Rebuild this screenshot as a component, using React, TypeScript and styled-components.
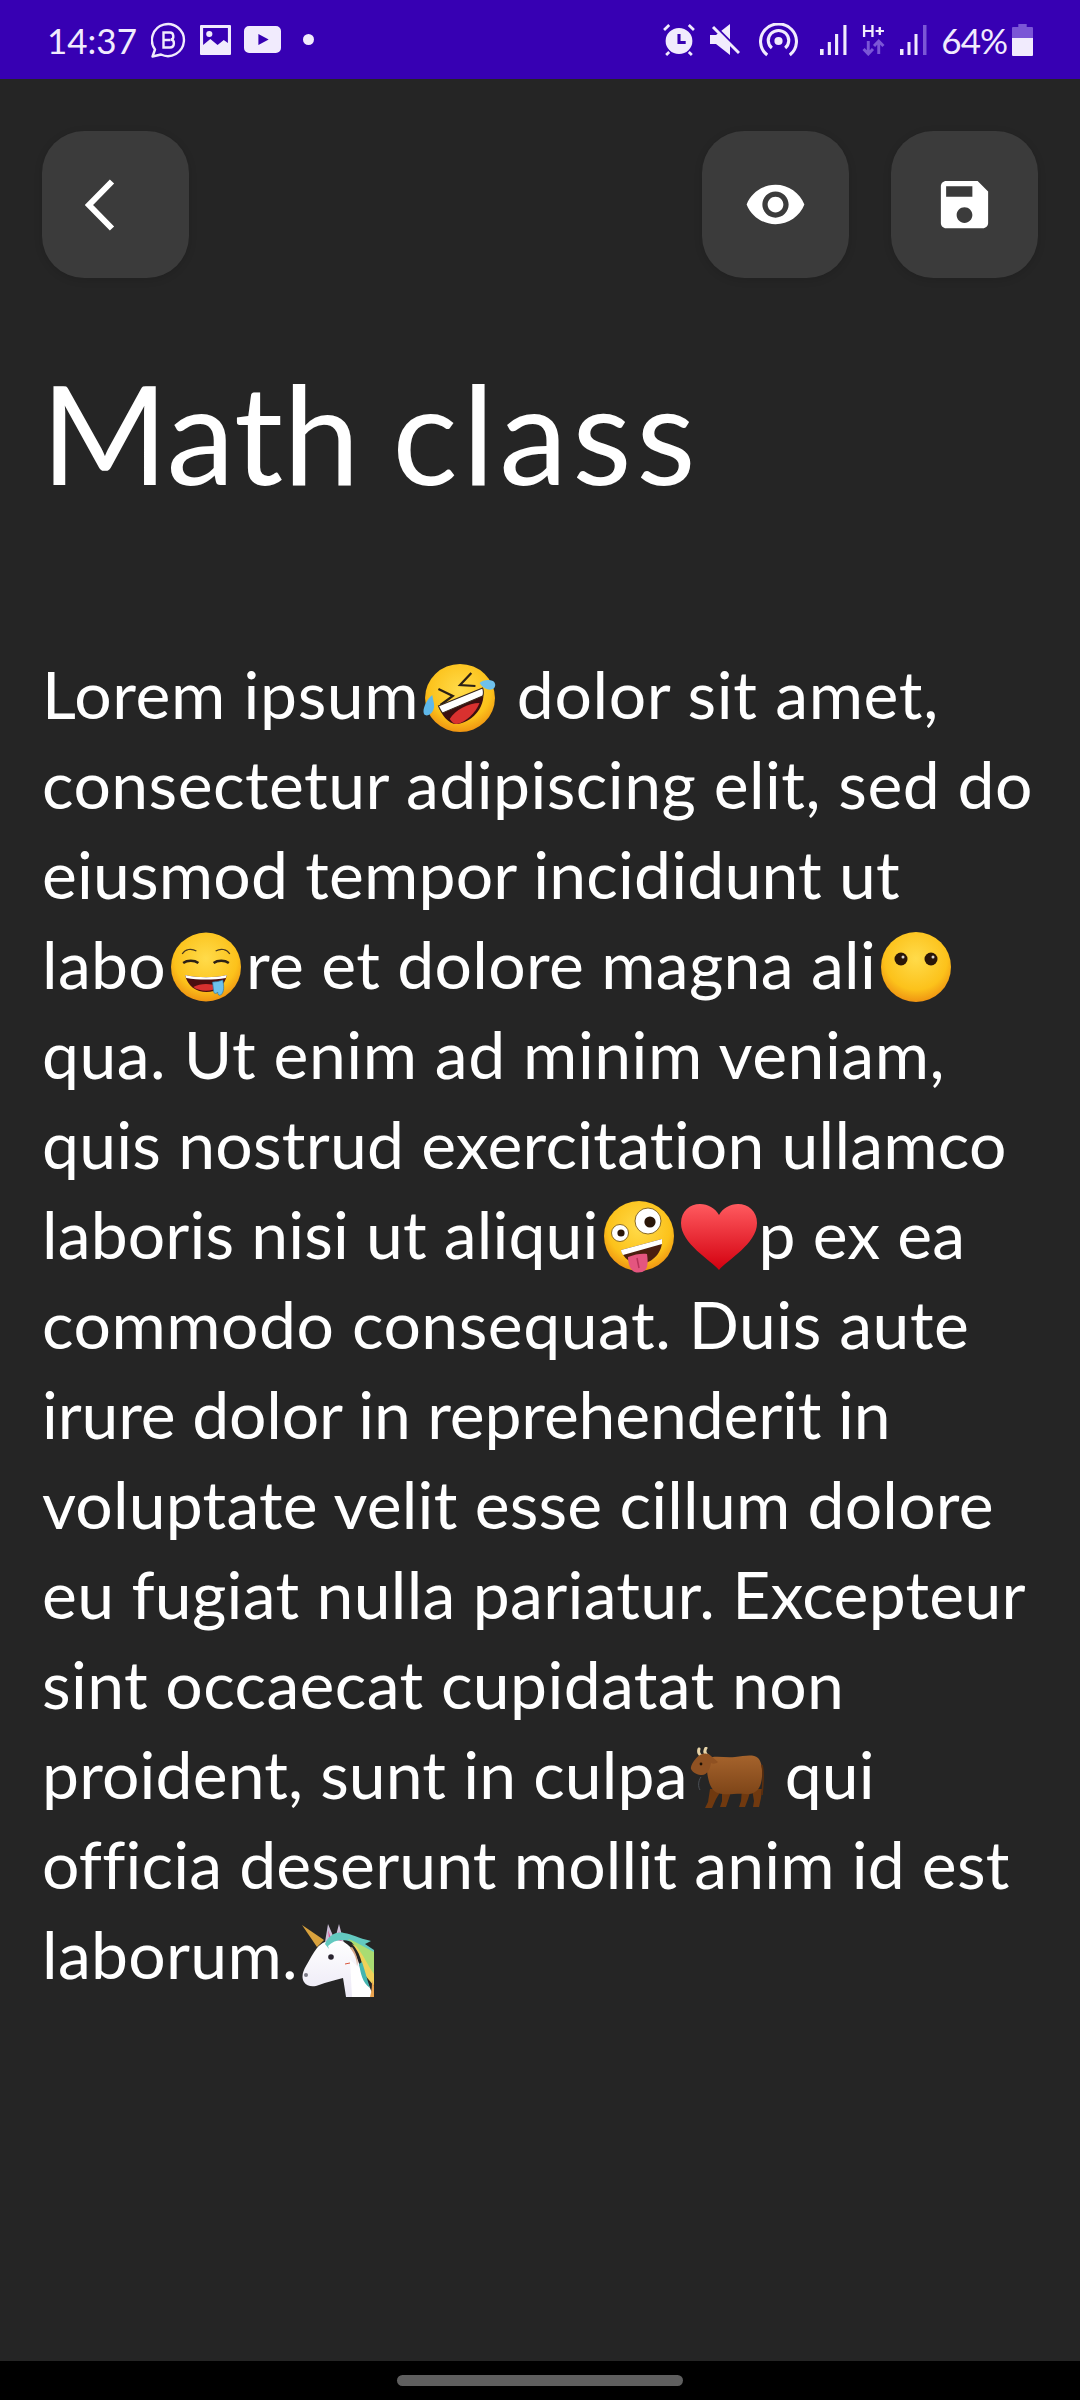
import React from "react";
import styled, { createGlobalStyle } from "styled-components";

const Global = createGlobalStyle`
  html, body { margin: 0; padding: 0; background: #252525; }
`;

const Page = styled.div`
  width: 1080px;
  height: 2400px;
  display: flex;
  flex-direction: column;
  background: #252525;
  color: #fff;
  font-family: "Lato", "Noto Sans", sans-serif;
  font-variant-ligatures: none;
  overflow: hidden;
`;

const StatusBar = styled.header`
  height: 79px;
  flex: none;
  box-sizing: border-box;
  padding: 0 47px;
  display: flex;
  align-items: center;
  justify-content: space-between;
  background: #3700b3;
  color: #f1ebfd;
`;

const StatusGroup = styled.div`
  display: flex;
  align-items: center;
`;

const StatusText = styled.span<{ $ml?: number; $track?: number }>`
  font-family: "Lato", sans-serif;
  font-weight: 400;
  font-size: 35px;
  line-height: 40px;
  letter-spacing: ${(p) => p.$track ?? 0}px;
  margin-left: ${(p) => p.$ml ?? 0}px;
`;

const StatusIcon = styled.svg<{ $ml: number }>`
  display: block;
  flex: none;
  margin-left: ${(p) => p.$ml}px;
`;

const Toolbar = styled.nav`
  display: flex;
  align-items: center;
  justify-content: space-between;
  padding: 52px 42px 0 42px;
`;

const ToolGroup = styled.div`
  display: flex;
  gap: 42px;
`;

const ToolButton = styled.button`
  width: 147px;
  height: 147px;
  padding: 0;
  border: 0;
  border-radius: 42px;
  background: #3b3b3b;
  box-shadow: 0 2px 8px rgba(0, 0, 0, 0.12);
  display: flex;
  align-items: center;
  justify-content: center;
`;

const Title = styled.h1`
  margin: 74px 0 0 41px;
  font-family: "Lato", "Noto Sans", sans-serif;
  font-weight: 400;
  font-size: 137px;
  line-height: 160px;
  word-spacing: -3px;
`;

const TitleWord = styled.span<{ $track: number }>`
  letter-spacing: ${(p) => p.$track}px;
`;

const Body = styled.div`
  margin: 137px 0 0 42px;
  font-size: 66px;
  line-height: 90px;
`;

const Line = styled.div<{ $track: number }>`
  height: 90px;
  white-space: nowrap;
  letter-spacing: ${(p) => p.$track}px;
`;

const EmojiSvg = styled.svg<{ $drop: number; $mx?: number }>`
  vertical-align: ${(p) => -p.$drop}px;
  margin: 0 ${(p) => p.$mx ?? 0}px;
`;

const Spacer = styled.div`
  flex: 1;
`;

const NavBar = styled.footer`
  height: 39px;
  flex: none;
  background: #000;
  display: flex;
  justify-content: center;
  padding-top: 14px;
  box-sizing: border-box;
`;

const NavPill = styled.div`
  width: 286px;
  height: 11px;
  border-radius: 6px;
  background: #5f5f5f;
`;

const FaceDefs = ({ id }: { id: string }) => (
  <defs>
    <radialGradient id={id} cx="50%" cy="38%" r="62%">
      <stop offset="0" stopColor="#ffdb4a" />
      <stop offset="0.72" stopColor="#fcc21b" />
      <stop offset="1" stopColor="#ef9412" />
    </radialGradient>
  </defs>
);

const Rofl = () => (
  <EmojiSvg $drop={13} $mx={3.5} width="73" height="69" viewBox="0 0 71 69" preserveAspectRatio="none" role="img" aria-label="rolling on the floor laughing">
    <FaceDefs id="rofl" />
    <circle cx="36" cy="35" r="34" fill="url(#rofl)" />
    <path d="M15 26l14 7-12 9" fill="none" stroke="#2b2015" strokeWidth="2.2" />
    <path d="M47 10l-11 12 15 1" fill="none" stroke="#2b2015" strokeWidth="2.2" />
    <path d="M15 43L58 25c4 17-8 33-24 36-9 1-16-9-19-18z" fill="#3b0f10" />
    <path d="M26 56c5-9 18-16 29-16-4 10-13 19-22 21-3 0-5-2-7-5z" fill="#d9312f" />
    <path d="M15 43L58 25c1 3 1 6 0 8L19 50c-2-2-3-5-4-7z" fill="#fff" stroke="#3b2a1d" strokeWidth="1" />
    <path d="M9 32c1 7 3 10 1 15-2 5-7 7-9 4-2-4 2-14 8-19z" fill="#5fb8ea" />
    <path d="M55 20c3-3 9-4 13-2 3 2 3 6 0 8-4 2-9 0-13-6z" fill="#6ec1ec" />
  </EmojiSvg>
);

const Drool = () => (
  <EmojiSvg $drop={13} $mx={5} width="70" height="70" viewBox="0 0 69 70" preserveAspectRatio="none" role="img" aria-label="drooling face">
    <FaceDefs id="drool" />
    <circle cx="34.5" cy="35" r="34.5" fill="url(#drool)" />
    <path d="M11 22c3-5 9-6 14-3M44 19c5-3 11-2 14 3" fill="none" stroke="#4b3a20" strokeWidth="1.2" />
    <path d="M12 31c4-3 11-3 15 0M42 31c4-3 11-3 15 0" fill="none" stroke="#2b2015" strokeWidth="2.4" />
    <path d="M14 43c12 3 29 3 41 0-2 11-10 17-20 17S16 54 14 43z" fill="#4a0f10" />
    <path d="M14 43c12 3 29 3 41 0l-1 3c-12 2-27 2-39 0z" fill="#fff" />
    <path d="M22 55c7-4 18-4 25 0-6 5-19 5-25 0z" fill="#d9312f" />
    <path d="M41 50c3 0 8-1 10-2 1 5 2 12-2 15-2 1-3-1-3-3-1 2-4 2-4-1z" fill="#6ec1ec" stroke="#2d7ea8" strokeWidth="0.7" />
  </EmojiSvg>
);

const NoMouth = () => (
  <EmojiSvg $drop={13} $mx={5} width="70" height="70" viewBox="0 0 70 70" role="img" aria-label="face without mouth">
    <FaceDefs id="nomouth" />
    <circle cx="35" cy="35" r="35" fill="url(#nomouth)" />
    <circle cx="20" cy="27" r="6.5" fill="#2a1608" />
    <circle cx="50" cy="27" r="6.5" fill="#2a1608" />
    <circle cx="22" cy="25" r="1.5" fill="#fff" opacity="0.8" />
    <circle cx="52" cy="25" r="1.5" fill="#fff" opacity="0.8" />
  </EmojiSvg>
);

const Zany = () => (
  <EmojiSvg $drop={14} $mx={5} width="70" height="72" viewBox="0 0 70 72" role="img" aria-label="zany face">
    <FaceDefs id="zany" />
    <circle cx="35" cy="35" r="35" fill="url(#zany)" />
    <circle cx="16" cy="32" r="8.5" fill="#fff" stroke="#8a6a22" strokeWidth="1" />
    <circle cx="17" cy="32" r="3.6" fill="#2a1608" />
    <circle cx="44" cy="20" r="13" fill="#fff" stroke="#8a6a22" strokeWidth="1" />
    <circle cx="46" cy="21" r="5.6" fill="#2a1608" />
    <path d="M17 49L58 38c1 13-9 24-22 25-9 0-17-6-19-14z" fill="#4a1f10" />
    <path d="M17 49L58 38l0 5-39 11c-1-2-2-3-2-5z" fill="#fff" />
    <path d="M24 56c7-3 15-4 19-3 1 6 1 12-1 15-2 4-11 5-14 1-3-3-4-9-4-13z" fill="#e4557f" />
    <path d="M33 57l2 10" stroke="#b83259" strokeWidth="1.5" fill="none" />
  </EmojiSvg>
);

const Heart = () => (
  <EmojiSvg $drop={11} $mx={2} width="76" height="66" viewBox="0 0 76 66" role="img" aria-label="red heart">
    <defs>
      <linearGradient id="heart" x1="0" y1="0" x2="0" y2="1">
        <stop offset="0" stopColor="#ff5a5f" />
        <stop offset="1" stopColor="#d3000f" />
      </linearGradient>
    </defs>
    <path d="M38 66C30 56 0 40 0 19 0 7 9 0 19 0c8 0 15 4 19 11C42 4 49 0 57 0c10 0 19 7 19 19 0 21-30 37-38 47z" fill="url(#heart)" />
  </EmojiSvg>
);

const Ox = () => (
  <EmojiSvg $drop={10} $mx={2.5} width="75" height="62" viewBox="0 0 75 62" role="img" aria-label="ox">
    <defs>
      <linearGradient id="ox" x1="0" y1="0" x2="0" y2="1">
        <stop offset="0" stopColor="#a5632c" />
        <stop offset="1" stopColor="#7e4518" />
      </linearGradient>
    </defs>
    <path d="M9 2c-1 3 0 6 3 7M16 1c-2 3-1 6 2 8" fill="none" stroke="#e6d3a8" strokeWidth="3" strokeLinecap="round" />
    <path d="M20 42l-2 13-3 6h7l4-9 6-10zM32 42l0 12-2 6h6l3-9 3-9zM52 42l-1 12-2 6h6l3-8 3-10zM62 42l2 12-1 6h6l2-9 1-9z" fill="#70390f" />
    <path d="M16 12c8-4 18-1 29-2 10-1 18-3 23 1 5 5 5 17 3 25-2 8-8 12-16 11-10-1-18 2-27-1-9-3-11-16-12-34z" fill="url(#ox)" />
    <path d="M72 18c2 8 1 20 0 30" fill="none" stroke="#5a2e0e" strokeWidth="1.6" />
    <path d="M1 22c-1-3 4-11 9-14 4-2 8-2 11 1l7 6c-2 2-5 2-7 1-1 6-4 12-9 12-4 0-9-2-11-6z" fill="#8f5122" />
    <circle cx="11" cy="17" r="1.4" fill="#1e1206" />
    <path d="M11 30c-3 4-3 10-1 13" fill="none" stroke="#4a4f55" strokeWidth="1" />
  </EmojiSvg>
);

const Unicorn = () => (
  <EmojiSvg $drop={18} $mx={4} width="72" height="73" viewBox="0 0 72 73" role="img" aria-label="unicorn">
    <defs>
      <linearGradient id="unihead" x1="0" y1="0" x2="0" y2="1">
        <stop offset="0" stopColor="#ffffff" />
        <stop offset="1" stopColor="#ece9f6" />
      </linearGradient>
    </defs>
    <path d="M0 1l22 15-7 7z" fill="#d9a23d" />
    <path d="M23 18L26 0l6 14zM33 15L37 0l5 19z" fill="#cdbfd8" />
    <path d="M27 14l-1-8 3 8zM35 16l2-9 3 12z" fill="#e0569a" />
    <path d="M15 24C22 16 32 14 42 18 52 24 56 34 60 50L70 73H44C43 66 42 60 41 54 34 56 24 58 17 61 12 63 5 63 2 58-1 53 1 47 4 42 8 35 11 29 15 24z" fill="url(#unihead)" />
    <path d="M48 36L60 46 72 73H50z" fill="#ffffff" />
    <circle cx="4" cy="51" r="2" fill="#7a7a86" />
    <circle cx="29" cy="33" r="2.8" fill="#2a2430" />
    <path d="M23 20C26 12 34 7 42 9 50 10 56 14 69 17L63 20 72 26V40C68 32 60 22 50 18 40 14 32 16 26 22L27 25z" fill="#63c9c0" />
    <path d="M46 15C55 18 64 24 72 28V52C67 45 62 35 56 27 53 22 50 18 46 15z" fill="#a9dc72" />
    <path d="M50 20C58 28 60 38 62 50L72 62V50C66 42 61 30 54 22z" fill="#f0d25a" />
    <path d="M48 24C53 30 55 36 55 42 57 37 54 28 50 23z" fill="#d8a98a" />
    <path d="M57 40C59 50 60 58 68 64 65 55 63 47 60 38z" fill="#45b5b0" />
    <path d="M70 56L72 62V73H68C70 66 70 60 70 56z" fill="#e9a24d" />
    <path d="M48 39l-5 1" stroke="#d9563c" strokeWidth="1" />
  </EmojiSvg>
);

const App = () => (
  <Page>
    <Global />
    <StatusBar>
      <StatusGroup>
        <StatusText>14:37</StatusText>
        <StatusIcon $ml={14} width="35" height="36" viewBox="0 0 35 36">
          <path d="M1.5 34.5l2.5-7A16 16 0 1 1 10 32.5z" fill="none" stroke="currentColor" strokeWidth="2.4" strokeLinejoin="round" />
          <path d="M12.5 10.5h6.5c4 0 4.500 6.500 1 7 4 .5 4 8-1 8h-6.500zM12.500 18h7" fill="none" stroke="currentColor" strokeWidth="2.4" />
        </StatusIcon>
        <StatusIcon $ml={14} width="31" height="30" viewBox="0 0 30 30" preserveAspectRatio="none">
          <path fillRule="evenodd" d="M1 0h28a1 1 0 0 1 1 1v28a1 1 0 0 1-1 1H1a1 1 0 0 1-1-1V1a1 1 0 0 1 1-1zM3 3v17l7-6 7 6 6-5 4 3V3zM9 6a3 3 0 1 1 0 6 3 3 0 0 1 0-6z" fill="currentColor" />
        </StatusIcon>
        <StatusIcon $ml={13} width="37" height="27" viewBox="0 0 36 27" preserveAspectRatio="none">
          <path fillRule="evenodd" d="M5 0h26a5 5 0 0 1 5 5v17a5 5 0 0 1-5 5H5a5 5 0 0 1-5-5V5a5 5 0 0 1 5-5zM14 8v11l10-5.500z" fill="currentColor" />
        </StatusIcon>
        <StatusIcon $ml={22} width="11" height="11" viewBox="0 0 11 11">
          <circle cx="5.500" cy="5.500" r="5.500" fill="currentColor" />
        </StatusIcon>
      </StatusGroup>
      <StatusGroup>
        <StatusIcon $ml={0} width="34" height="33" viewBox="0 0 33 33" preserveAspectRatio="none">
          <path fillRule="evenodd" d="M16.500 5a13 13 0 1 1 0 26 13 13 0 0 1 0-26zM15 11v10h8v-3h-5v-7z" fill="currentColor" />
          <path d="M2 7l5-5M31 7l-5-5M4 32l3-3M29 32l-3-3" stroke="currentColor" strokeWidth="2.600" fill="none" />
        </StatusIcon>
        <StatusIcon $ml={14} width="30" height="31" viewBox="0 0 30 31">
          <path d="M0 11h6L20 0v31L6 20H0z" fill="currentColor" />
          <path d="M0-2l30 30" stroke="#3700b3" strokeWidth="3.500" fill="none" />
          <path d="M3 3l26 26" stroke="currentColor" strokeWidth="3" fill="none" />
        </StatusIcon>
        <StatusIcon $ml={19} width="39" height="34" viewBox="0 0 38 34" preserveAspectRatio="none">
          <path d="M8 32A17.500 17.500 0 1 1 30 32" fill="none" stroke="currentColor" strokeWidth="3" />
          <path d="M12.500 25A10 10 0 1 1 25.500 25" fill="none" stroke="currentColor" strokeWidth="3" />
          <circle cx="19" cy="18" r="4" fill="currentColor" />
        </StatusIcon>
        <StatusIcon $ml={22} width="27" height="30" viewBox="0 0 26 30" preserveAspectRatio="none">
          <path d="M0 24h3.500v6H0zM7.500 17h3v13h-3zM14.500 9h3v21h-3zM22.500 0h3v30h-3z" fill="currentColor" />
        </StatusIcon>
        <StatusIcon $ml={15} width="23" height="32" viewBox="0 0 22 32" preserveAspectRatio="none">
          <path d="M2 1v12M10 1v12M2 7h8M13 7h8M17 3v8" stroke="currentColor" strokeWidth="2.200" fill="none" />
          <path d="M6 17v12M1.500 25L6 30l4.500-5M16 30V18M11.500 22L16 17l4.500 5" stroke="#7b56d6" strokeWidth="2.800" fill="none" />
        </StatusIcon>
        <StatusIcon $ml={15} width="27" height="30" viewBox="0 0 27 30">
          <path d="M0 24h3.500v6H0zM7.500 17h3v13h-3zM14.500 9h3v21h-3z" fill="currentColor" />
          <path d="M23 0h3.500v30H23z" fill="#7b56d6" />
        </StatusIcon>
        <StatusText $ml={14} $track={-1}>64%</StatusText>
        <StatusIcon $ml={5} width="21" height="32" viewBox="0 0 20 32" preserveAspectRatio="none">
          <path d="M6 0h8v3h5a1 1 0 0 1 1 1v12H0V4a1 1 0 0 1 1-1h5z" fill="#7b56d6" />
          <path d="M0 14h20v17a1 1 0 0 1-1 1H1a1 1 0 0 1-1-1z" fill="currentColor" />
        </StatusIcon>
      </StatusGroup>
    </StatusBar>

    <Toolbar>
      <ToolButton aria-label="Back">
        <svg width="62" height="62" viewBox="0 0 62 62">
          <path d="M27 7.500L4 31l23 23.500" fill="none" stroke="#fff" strokeWidth="6" />
        </svg>
      </ToolButton>
      <ToolGroup>
        <ToolButton aria-label="Preview">
          <svg width="63" height="63" viewBox="0 0 24 24">
            <path d="M12 4.500C7 4.500 2.730 7.610 1 12c1.730 4.390 6 7.500 11 7.500s9.270-3.110 11-7.500c-1.730-4.390-6-7.500-11-7.500zM12 17c-2.760 0-5-2.240-5-5s2.240-5 5-5 5 2.240 5 5-2.240 5-5 5zm0-8c-1.660 0-3 1.340-3 3s1.340 3 3 3 3-1.340 3-3-1.340-3-3-3z" fill="#fff" />
          </svg>
        </ToolButton>
        <ToolButton aria-label="Save">
          <svg width="63" height="63" viewBox="0 0 24 24">
            <path d="M17 3H5c-1.110 0-2 .9-2 2v14c0 1.100.89 2 2 2h14c1.100 0 2-.9 2-2V7l-4-4zm-5 16c-1.660 0-3-1.340-3-3s1.340-3 3-3 3 1.340 3 3-1.340 3-3 3zm3-10H5V5h10v4z" fill="#fff" />
          </svg>
        </ToolButton>
      </ToolGroup>
    </Toolbar>

    <Title>
      <TitleWord $track={0.3}>Math</TitleWord> <TitleWord $track={4.7}>class</TitleWord>
    </Title>

    <Body>
      <Line $track={0.65}>Lorem ipsum<Rofl /> dolor sit amet,</Line>
      <Line $track={0.48}>consectetur adipiscing elit, sed do</Line>
      <Line $track={0.2}>eiusmod tempor incididunt ut</Line>
      <Line $track={0.3}>labo<Drool />re et dolore magna ali<NoMouth /></Line>
      <Line $track={0.52}>qua. Ut enim ad minim veniam,</Line>
      <Line $track={0.23}>quis nostrud exercitation ullamco</Line>
      <Line $track={0.15}>laboris nisi ut aliqui<Zany /><Heart />p ex ea</Line>
      <Line $track={0.54}>commodo consequat. Duis aute</Line>
      <Line $track={-0.15}>irure dolor in reprehenderit in</Line>
      <Line $track={0.22}>voluptate velit esse cillum dolore</Line>
      <Line $track={0.3}>eu fugiat nulla pariatur. Excepteur</Line>
      <Line $track={0.4}>sint occaecat cupidatat non</Line>
      <Line $track={0.15}>proident, sunt in culpa<Ox /> qui</Line>
      <Line $track={0.17}>officia deserunt mollit anim id est</Line>
      <Line $track={0.3}>laborum.<Unicorn /></Line>
    </Body>

    <Spacer />
    <NavBar>
      <NavPill />
    </NavBar>
  </Page>
);

export default App;
